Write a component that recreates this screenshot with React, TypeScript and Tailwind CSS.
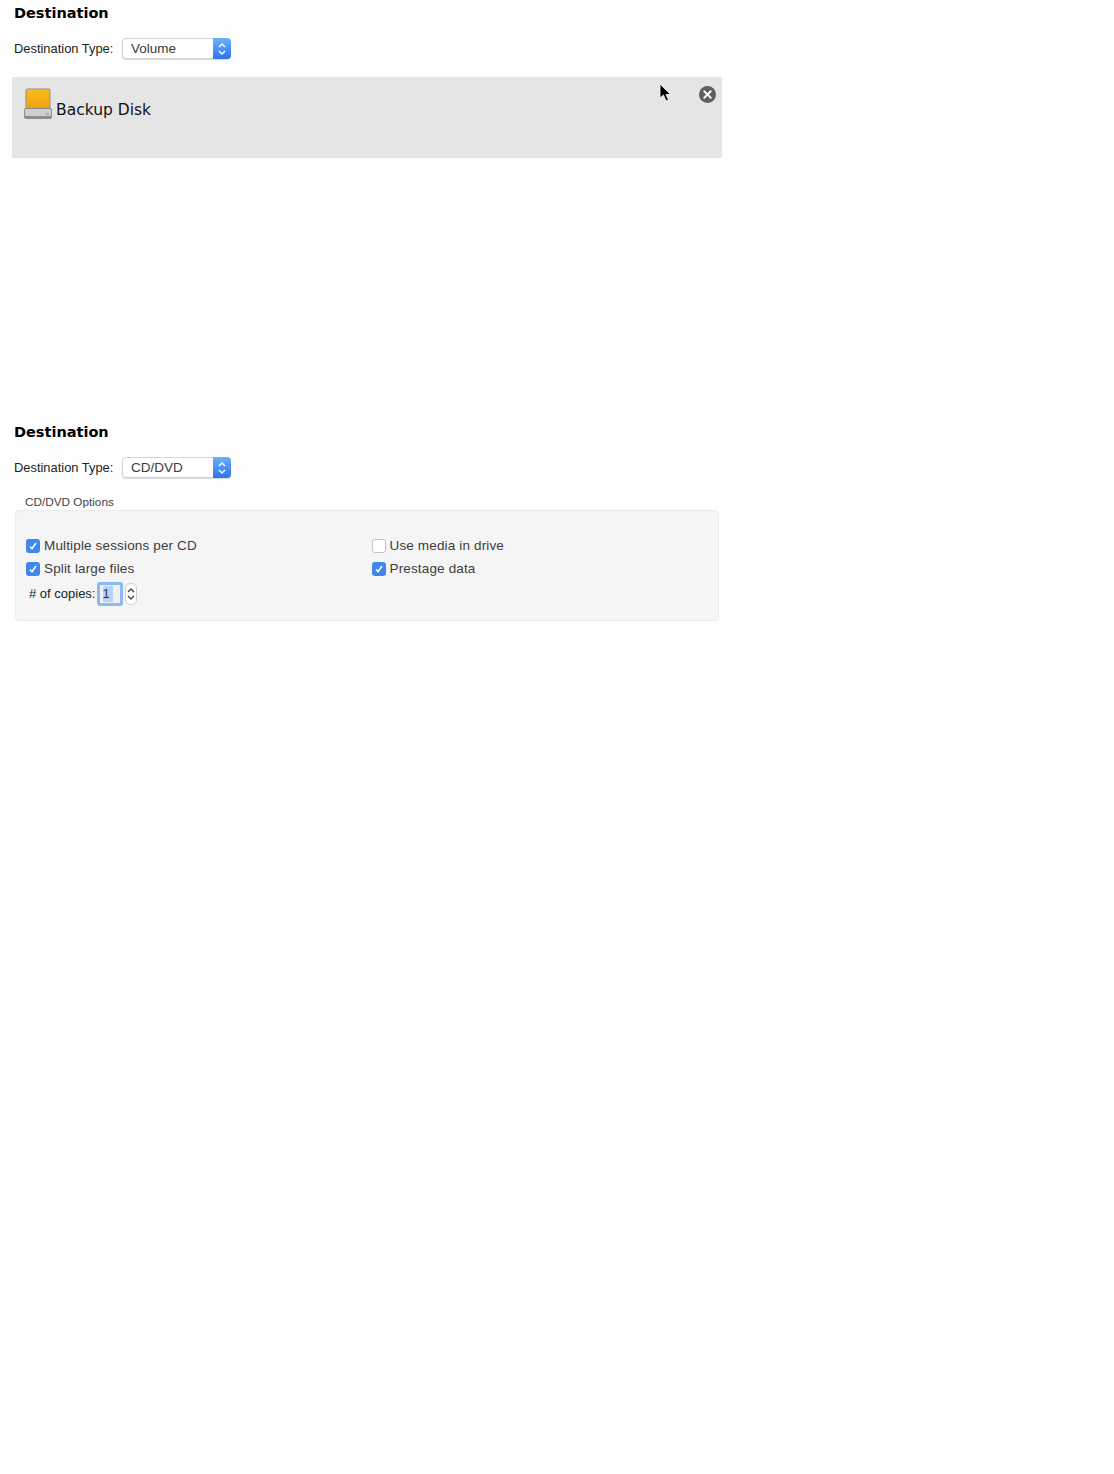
import { X } from 'lucide-react';

function Chevrons({ color = 'white' }: { color?: string }) {
  return (
    <svg width="8" height="14" viewBox="0 0 8 14" fill="none" stroke={color} strokeWidth="1.4">
      <path d="M1 5l3-3 3 3" />
      <path d="M1 9l3 3 3-3" />
    </svg>
  );
}

function Select({ value }: { value: string }) {
  return (
    <div className="flex h-[21px] w-[109px] rounded-[4px] border border-[#d4d4d4] bg-white shadow-[0_1px_1px_rgba(0,0,0,0.15)]">
      <div className="flex-1 pl-2 text-[13.5px] leading-[19px] text-[#3a3a3a]">{value}</div>
      <div className="-my-px -mr-px flex w-[18px] items-center justify-center rounded-r-[4px] bg-gradient-to-b from-[#6cb0fb] to-[#2f73ec]">
        <Chevrons />
      </div>
    </div>
  );
}

function Header({ value }: { value: string }) {
  return (
    <div className="pl-[14px]">
      <h2 className="font-['DejaVu_Sans'] text-[14.5px] leading-[26px] font-bold text-black">Destination</h2>
      <div className="mt-[12px] flex items-center gap-[9px]">
        <span className="w-[99px] text-[12.9px] whitespace-nowrap text-[#222]">Destination Type:</span>
        <Select value={value} />
      </div>
    </div>
  );
}

function Check({ label, checked }: { label: string; checked: boolean }) {
  return (
    <div className="flex h-[23px] items-center gap-[4px]">
      {checked ? (
        <div className="-mt-[2px] flex h-[14px] w-[14px] items-center justify-center rounded-[3px] bg-[#3f86f0]">
          <svg width="10" height="10" viewBox="0 0 10 10" fill="none" stroke="white" strokeWidth="1.6">
            <path d="M2 5.500l2 2.200L8 2" />
          </svg>
        </div>
      ) : (
        <div className="-mt-[2px] h-[14px] w-[14px] rounded-[3px] border border-[#c4c4c4] bg-white" />
      )}
      <span className="text-[13.5px] tracking-[0.15px] text-[#3c3c3c]">{label}</span>
    </div>
  );
}

function DiskIcon() {
  return (
    <svg width="28" height="31" viewBox="0 0 28 31" className="shrink-0">
      <defs>
        <linearGradient id="disk-top" x1="0" y1="0" x2="0" y2="1">
          <stop offset="0" stopColor="#f9bd1e" />
          <stop offset="1" stopColor="#ee9f10" />
        </linearGradient>
      </defs>
      <rect x="1.5" y="0.5" width="25" height="24" rx="2.500" fill="#8f8f8f" />
      <rect x="2.500" y="1.500" width="23" height="20" rx="1.500" fill="url(#disk-top)" />
      <path d="M0 22a2 2 0 0 1 2-2h24a2 2 0 0 1 2 2v7a2 2 0 0 1-2 2H2a2 2 0 0 1-2-2z" fill="#8d8d8d" />
      <rect x="1" y="21" width="26" height="7" rx="1" fill="#cfcfcf" />
      <rect x="22" y="25" width="3" height="2" fill="#7ed07a" />
    </svg>
  );
}

export default function App() {
  return (
    <div className="min-h-[1474px] w-[1114px] bg-[#fefefe] font-['Liberation_Sans',sans-serif]">
      <section className="h-[419px]">
        <Header value="Volume" />

        <div className="relative mt-[18px] ml-[12px] h-[81px] w-[710px] bg-[#e5e5e6] pt-[11px] pl-[12px]">
          <div className="flex items-start gap-[4px]">
            <DiskIcon />
            <span className="mt-[13px] font-['DejaVu_Sans'] text-[15.500px] leading-[18px] text-[#111]">Backup Disk</span>
          </div>

          {/* mouse pointer */}
          <svg width="12" height="19" viewBox="0 0 12 19" className="absolute top-[6px] left-[647px]">
            <path d="M1 1v14l3.500-3 2.500 6 2.500-1-2.500-5.500h4.500z" fill="black" stroke="white" strokeWidth="0.8" />
          </svg>

          <div className="absolute top-[9px] left-[687px] flex h-[17px] w-[17px] items-center justify-center rounded-full bg-[#5f5f5f]">
            <X size={13} color="white" strokeWidth={3.5} />
          </div>
        </div>
      </section>

      <section>
        <Header value="CD/DVD" />

        <div className="mt-[17px] pl-[25px] text-[11.75px] leading-[14px] text-[#444]">CD/DVD Options</div>
        <div className="mt-px ml-[15px] h-[111px] w-[704px] rounded-[4px] border border-[#ececec] bg-[#f5f5f6] pt-[24px] pl-[10px]">
          <div className="grid grid-cols-[345.500px_1fr]">
            <Check label="Multiple sessions per CD" checked />
            <Check label="Use media in drive" checked={false} />
            <Check label="Split large files" checked />
            <Check label="Prestage data" checked />
          </div>

          <div className="mt-[1px] ml-[3px] flex items-center">
            <span className="text-[13px] text-[#222]">
              # of copies:
            </span>
            <div className="ml-px flex h-[24px] w-[26px] items-center rounded-[3px] bg-[#8cb8f3] p-[3px]">
              <div className="flex h-full w-full items-center bg-[#f0f0f2] pl-[3px]">
                <span className="bg-[#b5d5fd] pr-[3px] text-[13px] leading-[16px] text-[#333]">1</span>
              </div>
            </div>
            <div className="ml-[2px] flex h-[22px] w-[12px] items-center justify-center rounded-[5px] border border-[#cfcfcf] bg-white">
              <Chevrons color="#444" />
            </div>
          </div>
        </div>
      </section>
    </div>
  );
}
